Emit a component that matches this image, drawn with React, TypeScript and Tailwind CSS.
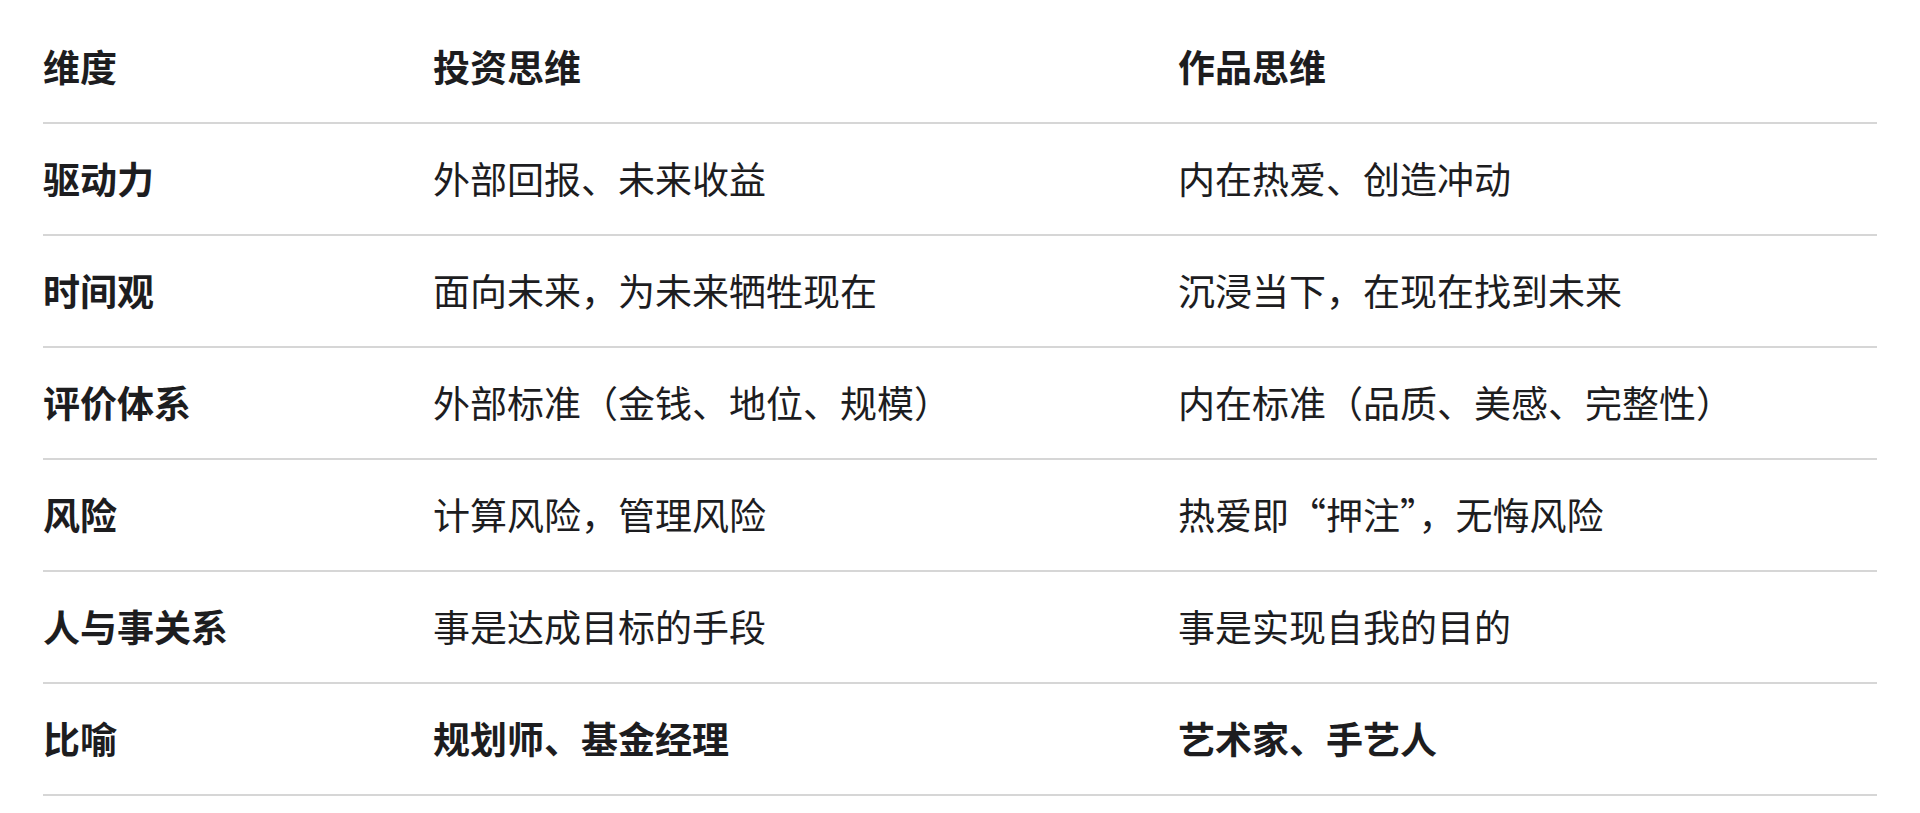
const rows = [
  { dim: "驱动力", invest: "外部回报、未来收益", work: "内在热爱、创造冲动" },
  { dim: "时间观", invest: "面向未来，为未来牺牲现在", work: "沉浸当下，在现在找到未来" },
  { dim: "评价体系", invest: "外部标准（金钱、地位、规模）", work: "内在标准（品质、美感、完整性）" },
  { dim: "风险", invest: "计算风险，管理风险", work: "热爱即“押注”，无悔风险" },
  { dim: "人与事关系", invest: "事是达成目标的手段", work: "事是实现自我的目的" },
  { dim: "比喻", invest: "规划师、基金经理", work: "艺术家、手艺人", bold: true },
];

const cell = "flex items-center";

export default function App() {
  return (
    <div
      className="min-h-[813px] bg-white px-[43px] pt-[12px] text-[37px] text-[#1d1d1f]"
      style={{ fontFamily: '"Noto Sans CJK SC", "Noto Sans", sans-serif' }}
    >
      <div className="grid grid-cols-[390px_745px_1fr] h-[112px] border-b-2 border-[#d6d6d6] font-semibold">
        <div className={cell}>维度</div>
        <div className={cell}>投资思维</div>
        <div className={cell}>作品思维</div>
      </div>
      {rows.map((row) => (
        <div
          key={row.dim}
          className="grid grid-cols-[390px_745px_1fr] h-[112px] border-b-2 border-[#d6d6d6]"
        >
          <div className={`${cell} font-semibold`}>{row.dim}</div>
          <div className={`${cell} ${row.bold ? "font-semibold" : "font-normal"}`}>{row.invest}</div>
          <div className={`${cell} ${row.bold ? "font-semibold" : "font-normal"}`}>{row.work}</div>
        </div>
      ))}
    </div>
  );
}
